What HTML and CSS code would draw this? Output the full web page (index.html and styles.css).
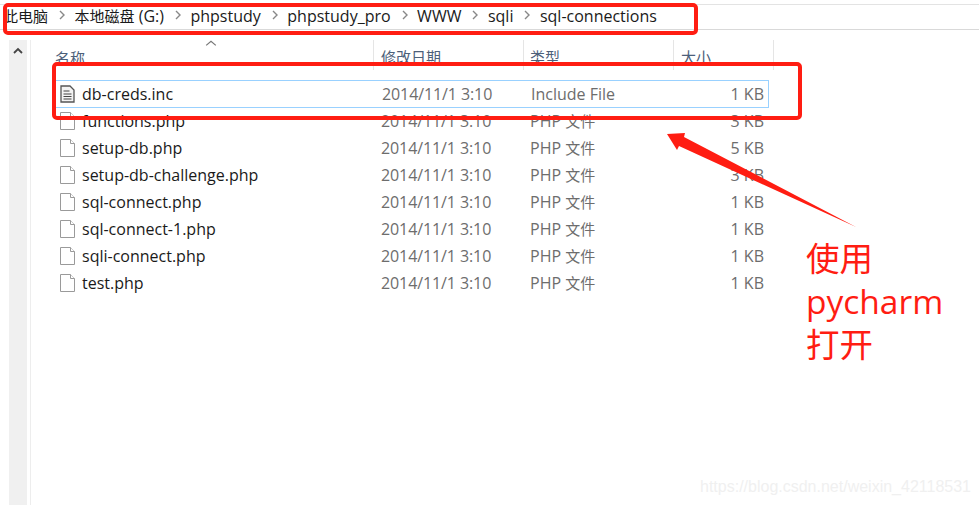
FILE: index.html
```html
<!DOCTYPE html>
<html lang="zh-CN">
<head>
<meta charset="utf-8">
<title>sql-connections</title>
<link rel="stylesheet" href="styles.css">
</head>
<body>
<div class="topline"></div>
<nav class="crumbs">
  <span class="crumb first zh">此电脑</span><svg class="sep" viewBox="0 0 8 10"><path d="M2 1l4 4-4 4"/></svg>
  <span class="crumb"><span class="zh">本地磁盘</span> (G:)</span><svg class="sep" viewBox="0 0 8 10"><path d="M2 1l4 4-4 4"/></svg>
  <span class="crumb">phpstudy</span><svg class="sep" viewBox="0 0 8 10"><path d="M2 1l4 4-4 4"/></svg>
  <span class="crumb">phpstudy_pro</span><svg class="sep" viewBox="0 0 8 10"><path d="M2 1l4 4-4 4"/></svg>
  <span class="crumb">WWW</span><svg class="sep" viewBox="0 0 8 10"><path d="M2 1l4 4-4 4"/></svg>
  <span class="crumb">sqli</span><svg class="sep" viewBox="0 0 8 10"><path d="M2 1l4 4-4 4"/></svg>
  <span class="crumb">sql-connections</span>
</nav>
<main class="pane">
  <aside class="scrollbar">
    <svg class="scroll-up" viewBox="0 0 10 7"><path d="M1 6l4-4 4 4"/></svg>
  </aside>
  <section class="list">
    <svg class="sort" viewBox="0 0 10 5"><path d="M1 4.5L5 1l4 3.5"/></svg>
    <div class="row head">
      <span class="c-name">名称</span><span class="c-date">修改日期</span><span class="c-type">类型</span><span class="c-size">大小</span>
    </div>
    <div class="row selected">
      <span class="c-name"><svg class="ico" viewBox="0 0 15 18"><path class="doc-dark" d="M1 1h9l4 4v12H1z"/><path class="doc-lines" d="M3.500 6h6M3.500 9h8M3.500 11.500h8M3.500 14h8"/></svg>db-creds.inc</span><span class="c-date">2014/11/1 3:10</span><span class="c-type">Include File</span><span class="c-size">1 KB</span>
    </div>
    <div class="row">
      <span class="c-name"><svg class="ico" viewBox="0 0 15 18"><path class="doc" d="M.5.5h10l4 4v13H.5z"/><path class="doc" d="M10.500.5v4h4"/></svg>functions.php</span><span class="c-date">2014/11/1 3:10</span><span class="c-type">PHP <span class="zh">文件</span></span><span class="c-size">3 KB</span>
    </div>
    <div class="row">
      <span class="c-name"><svg class="ico" viewBox="0 0 15 18"><path class="doc" d="M.5.5h10l4 4v13H.5z"/><path class="doc" d="M10.500.5v4h4"/></svg>setup-db.php</span><span class="c-date">2014/11/1 3:10</span><span class="c-type">PHP <span class="zh">文件</span></span><span class="c-size">5 KB</span>
    </div>
    <div class="row">
      <span class="c-name"><svg class="ico" viewBox="0 0 15 18"><path class="doc" d="M.5.5h10l4 4v13H.5z"/><path class="doc" d="M10.500.5v4h4"/></svg>setup-db-challenge.php</span><span class="c-date">2014/11/1 3:10</span><span class="c-type">PHP <span class="zh">文件</span></span><span class="c-size">3 KB</span>
    </div>
    <div class="row">
      <span class="c-name"><svg class="ico" viewBox="0 0 15 18"><path class="doc" d="M.5.5h10l4 4v13H.5z"/><path class="doc" d="M10.500.5v4h4"/></svg>sql-connect.php</span><span class="c-date">2014/11/1 3:10</span><span class="c-type">PHP <span class="zh">文件</span></span><span class="c-size">1 KB</span>
    </div>
    <div class="row">
      <span class="c-name"><svg class="ico" viewBox="0 0 15 18"><path class="doc" d="M.5.5h10l4 4v13H.5z"/><path class="doc" d="M10.500.5v4h4"/></svg>sql-connect-1.php</span><span class="c-date">2014/11/1 3:10</span><span class="c-type">PHP <span class="zh">文件</span></span><span class="c-size">1 KB</span>
    </div>
    <div class="row">
      <span class="c-name"><svg class="ico" viewBox="0 0 15 18"><path class="doc" d="M.5.5h10l4 4v13H.5z"/><path class="doc" d="M10.500.5v4h4"/></svg>sqli-connect.php</span><span class="c-date">2014/11/1 3:10</span><span class="c-type">PHP <span class="zh">文件</span></span><span class="c-size">1 KB</span>
    </div>
    <div class="row">
      <span class="c-name"><svg class="ico" viewBox="0 0 15 18"><path class="doc" d="M.5.5h10l4 4v13H.5z"/><path class="doc" d="M10.500.5v4h4"/></svg>test.php</span><span class="c-date">2014/11/1 3:10</span><span class="c-type">PHP <span class="zh">文件</span></span><span class="c-size">1 KB</span>
    </div>
  </section>
</main>
<div class="mark mark-path"></div>
<div class="mark mark-row"></div>
<svg class="arrow" viewBox="0 0 190 95"><path d="M0 1L18 0 17 4 189 94 12 13 10 17z"/></svg>
<div class="note">使用<br>pycharm<br>打开</div>
<div class="watermark">https://blog.csdn.net/weixin_42118531</div>
</body>
</html>
```
FILE: styles.css
```css
* { box-sizing: border-box; }
html, body { margin: 0; height: 100%; }
body {
  width: 979px;
  height: 505px;
  overflow: hidden;
  position: relative;
  background: #fff;
  font-family: "Open Sans", "Noto Sans CJK SC", sans-serif;
  font-size: 16px;
  color: #1a1a1a;
}
.zh { font-size: 15px; }
.topline { height: 5px; border-bottom: 1px solid #e3e3e3; }
.crumbs {
  height: 25px;
  border-bottom: 1px solid #d9d9d9;
  display: flex;
  align-items: flex-start;
  white-space: nowrap;
  overflow: hidden;
}
.crumb { line-height: 22px; }
.crumb.first { margin-left: 3px; }
.sep { width: 8px; height: 10px; margin: 5px 8.5px 0 10px; flex: none; }
.sep path { fill: none; stroke: #888; stroke-width: 1.4; }
.pane { display: flex; height: 475px; padding: 10px 0 0 9px; }
.scrollbar {
  width: 18px;
  background: #f0f0f0;
  flex: none;
  display: flex;
  justify-content: center;
  padding-top: 7px;
  align-items: flex-start;
}
.scroll-up { width: 10px; height: 7px; }
.scroll-up path { fill: none; stroke: #444; stroke-width: 1.8; }
.list {
  position: relative;
  margin-left: 3px;
  padding-left: 24px;
  border-left: 1px solid #ededed;
  flex: 1;
}
.sort { position: absolute; left: 174px; top: 0; width: 12px; height: 6px; }
.sort path { fill: none; stroke: #777; stroke-width: 1; }
.row {
  display: grid;
  grid-template-columns: 319px 150px 150px 100px;
  height: 27px;
  align-items: center;
  width: 719px;
  color: #6d6d6d;
}
.row > span { white-space: nowrap; padding-left: 6px; }
.row > .c-name { color: #1a1a1a; display: flex; align-items: center; padding-left: 5px; }
.row > .c-date { padding-left: 7px; letter-spacing: -0.1px; }
.row > .c-size { text-align: right; padding-right: 10px; }
.head { height: 32px; align-items: end; color: #4c607a; margin-bottom: -1px; padding-bottom: 2px; font-size: 15px; }
.row.head > .c-name { color: #4c607a; padding-left: 0; }
.head > span { height: 30px; padding-top: 7px; line-height: 21px; border-right: 1px solid #e5e5e5; }
.row.head > .c-date { letter-spacing: 0; }
.row.head > .c-size { text-align: left; padding-left: 7px; padding-right: 0; }
.selected { width: 714px; border: 1px solid #99d1ff; margin-top: 9px; height: 28px; margin-bottom: -1px; }
.row.selected > .c-name { padding-left: 4px; }
.row.selected > .c-size { padding-right: 11px; }
.ico { width: 15px; height: 18px; margin-right: 7px; flex: none; }
.doc { fill: #fff; stroke: #9a9a9a; stroke-width: 1; }
.doc-dark { fill: #f3f3f3; stroke: #555; stroke-width: 1.3; }
.doc-lines { fill: none; stroke: #444; stroke-width: 1.2; }
.mark {
  position: absolute;
  border: 4px solid #ff1d12;
  border-radius: 5px;
}
.mark-path { left: 3px; top: 3px; width: 695px; height: 32px; }
.mark-row { left: 52px; top: 62px; width: 750px; height: 58px; }
.arrow { position: absolute; left: 667px; top: 133px; width: 190px; height: 95px; }
.arrow path { fill: #ff1d12; }
.note {
  position: absolute;
  left: 806px;
  top: 237px;
  color: #ff1d12;
  font-size: 33.5px;
  line-height: 43px;
}
.watermark {
  position: absolute;
  left: 700px;
  top: 476px;
  color: #f0f0f0;
  font-family: "Liberation Sans", sans-serif;
  font-size: 16px;
  line-height: 22px;
}
```
